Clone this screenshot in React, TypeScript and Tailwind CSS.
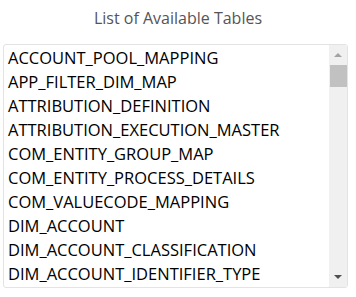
import React from 'react';

const tables = [
  'ACCOUNT_POOL_MAPPING',
  'APP_FILTER_DIM_MAP',
  'ATTRIBUTION_DEFINITION',
  'ATTRIBUTION_EXECUTION_MASTER',
  'COM_ENTITY_GROUP_MAP',
  'COM_ENTITY_PROCESS_DETAILS',
  'COM_VALUECODE_MAPPING',
  'DIM_ACCOUNT',
  'DIM_ACCOUNT_CLASSIFICATION',
  'DIM_ACCOUNT_IDENTIFIER_TYPE',
];

const App = () => {
  return (
    <div className="w-[356px] h-[297px] bg-white font-['Open_Sans',sans-serif] pt-[7px]">
      <div className="text-center text-[16px] text-[#555] leading-[22px]">List of Available Tables</div>

      <div className="mt-[15px] ml-[3px] w-[345px] h-[244px] border border-[#e3e3e3] rounded-[3px] flex overflow-hidden">
        <ul className="flex-1 overflow-hidden pl-[4px] pt-[1px]">
          {tables.map((t) => (
            <li key={t} className="text-[16.5px] leading-[24px] text-black whitespace-nowrap">
              {t}
            </li>
          ))}
        </ul>

        {/* scrollbar */}
        <div className="w-[18px] bg-[#f0f0f0] flex flex-col items-center">
          <div className="h-[20px] flex items-center justify-center">
            <svg width="8" height="4" viewBox="0 0 8 4">
              <path d="M0 4 L4 0 L8 4 Z" fill="#a3a3a3" />
            </svg>
          </div>
          <div className="w-[17px] h-[22px] bg-[#c1c1c1]" />
          <div className="flex-1" />
          <div className="h-[20px] flex items-center justify-center">
            <svg width="8" height="4" viewBox="0 0 8 4">
              <path d="M0 0 L4 4 L8 0 Z" fill="#505050" />
            </svg>
          </div>
        </div>
      </div>
    </div>
  );
};

export default App;
